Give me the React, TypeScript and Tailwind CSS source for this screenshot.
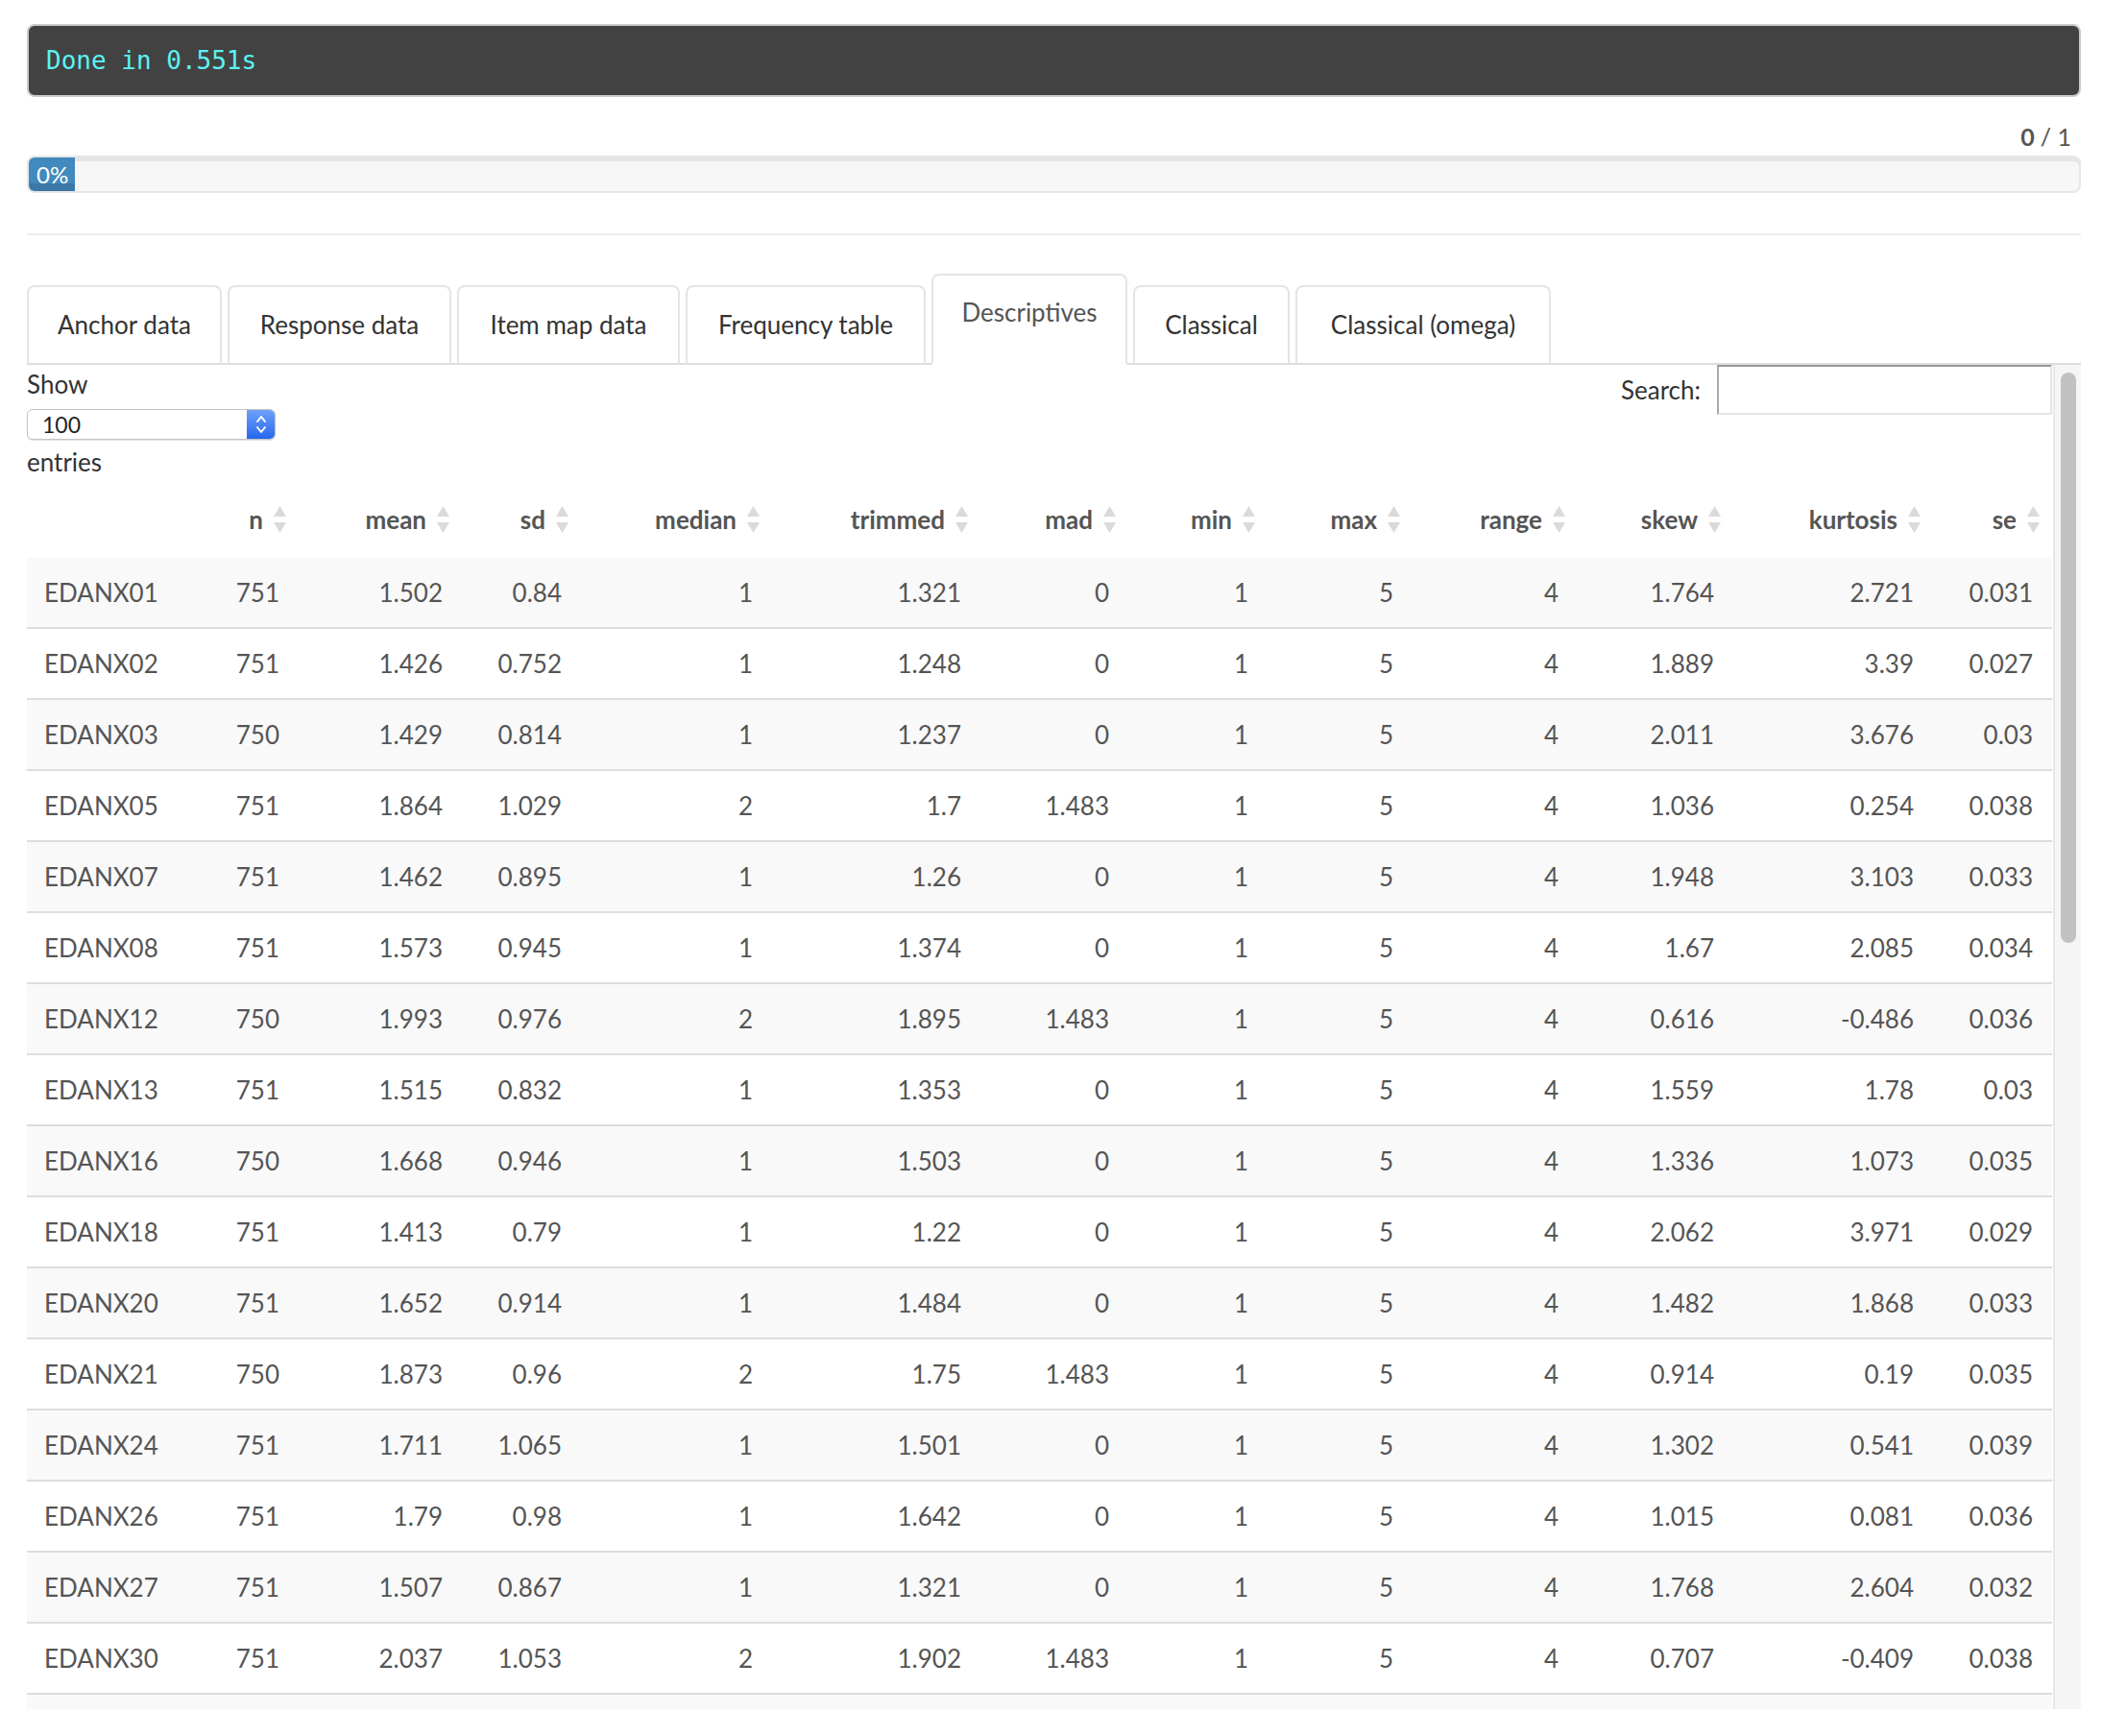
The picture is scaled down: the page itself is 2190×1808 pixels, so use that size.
import React from 'react';

type Row = string[];

const columns = ['', 'n', 'mean', 'sd', 'median', 'trimmed', 'mad', 'min', 'max', 'range', 'skew', 'kurtosis', 'se'];

const rows: Row[] = [
  ['EDANX01', '751', '1.502', '0.84', '1', '1.321', '0', '1', '5', '4', '1.764', '2.721', '0.031'],
  ['EDANX02', '751', '1.426', '0.752', '1', '1.248', '0', '1', '5', '4', '1.889', '3.39', '0.027'],
  ['EDANX03', '750', '1.429', '0.814', '1', '1.237', '0', '1', '5', '4', '2.011', '3.676', '0.03'],
  ['EDANX05', '751', '1.864', '1.029', '2', '1.7', '1.483', '1', '5', '4', '1.036', '0.254', '0.038'],
  ['EDANX07', '751', '1.462', '0.895', '1', '1.26', '0', '1', '5', '4', '1.948', '3.103', '0.033'],
  ['EDANX08', '751', '1.573', '0.945', '1', '1.374', '0', '1', '5', '4', '1.67', '2.085', '0.034'],
  ['EDANX12', '750', '1.993', '0.976', '2', '1.895', '1.483', '1', '5', '4', '0.616', '-0.486', '0.036'],
  ['EDANX13', '751', '1.515', '0.832', '1', '1.353', '0', '1', '5', '4', '1.559', '1.78', '0.03'],
  ['EDANX16', '750', '1.668', '0.946', '1', '1.503', '0', '1', '5', '4', '1.336', '1.073', '0.035'],
  ['EDANX18', '751', '1.413', '0.79', '1', '1.22', '0', '1', '5', '4', '2.062', '3.971', '0.029'],
  ['EDANX20', '751', '1.652', '0.914', '1', '1.484', '0', '1', '5', '4', '1.482', '1.868', '0.033'],
  ['EDANX21', '750', '1.873', '0.96', '2', '1.75', '1.483', '1', '5', '4', '0.914', '0.19', '0.035'],
  ['EDANX24', '751', '1.711', '1.065', '1', '1.501', '0', '1', '5', '4', '1.302', '0.541', '0.039'],
  ['EDANX26', '751', '1.79', '0.98', '1', '1.642', '0', '1', '5', '4', '1.015', '0.081', '0.036'],
  ['EDANX27', '751', '1.507', '0.867', '1', '1.321', '0', '1', '5', '4', '1.768', '2.604', '0.032'],
  ['EDANX30', '751', '2.037', '1.053', '2', '1.902', '1.483', '1', '5', '4', '0.707', '-0.409', '0.038'],
];

const tabs = [
  { label: 'Anchor data', w: 'w-[203px]' },
  { label: 'Response data', w: 'w-[233px]' },
  { label: 'Item map data', w: 'w-[232px]' },
  { label: 'Frequency table', w: 'w-[250px]' },
  { label: 'Descriptives', w: 'w-[204px]', active: true },
  { label: 'Classical', w: 'w-[163px]' },
  { label: 'Classical (omega)', w: 'w-[266px]' },
];

const gridCols =
  'grid grid-cols-[172px_111px_170px_124px_199px_217px_154px_145px_151px_172px_162px_208px_124px]';

const SortIcon = () => (
  <svg width="15" height="30" viewBox="0 0 15 30" className="shrink-0">
    <polygon points="7.5,1 14,12 1,12" fill="#dadada" />
    <polygon points="1,18 14,18 7.5,29" fill="#dadada" />
  </svg>
);

const App: React.FC = () => {
  return (
    <div className="min-h-screen bg-white font-['Lato',sans-serif] text-[#333]">
      <div className="ml-[28px] w-[2139px] pt-[25px]">
        {/* console output */}
        <div className="flex h-[76px] items-center rounded-[8px] border-2 border-[#cacaca] bg-[#424242] px-[18px] font-['DejaVu_Sans_Mono',monospace] text-[26px] text-[#5cf2f2]">
          Done in 0.551s
        </div>

        {/* progress */}
        <div className="mt-[23px] flex h-[36px] justify-end pr-[10px] text-[25px] leading-[36px] text-[#555]">
          <span className="font-bold">0</span>
          <span className="ml-[6px]">/ 1</span>
        </div>
        <div className="mt-[2px] h-[39px] overflow-hidden rounded-[8px] border-2 border-[#e6e6e6] bg-[#f7f7f7] shadow-[inset_0_4px_0_rgba(0,0,0,0.07)]">
          <div className="flex h-full w-[48px] items-center bg-[#4289bd] pl-[8px] text-[24px] text-white shadow-[inset_0_-8px_0_rgba(0,0,0,0.12)]">
            0%
          </div>
        </div>
        <div className="mt-[42px] h-[2px] bg-[#eeeeee]" />

        {/* tabs */}
        <div className="mt-[40px] flex items-end gap-[6px] border-b-2 border-[#dddddd]">
          {tabs.map((t) =>
            t.active ? (
              <div
                key={t.label}
                className={`${t.w} -mb-[2px] flex justify-center rounded-t-[8px] border-2 border-[#e4e4e4] border-b-white bg-white pt-[18px] pb-[33px] text-[26px] leading-[40px] text-[#555]`}
              >
                {t.label}
              </div>
            ) : (
              <div
                key={t.label}
                className={`${t.w} -mb-[2px] flex justify-center rounded-t-[8px] border-2 border-[#e4e4e4] border-b-[#dddddd] pt-[19px] pb-[20px] text-[26px] leading-[40px] text-[#333]`}
              >
                {t.label}
              </div>
            )
          )}
        </div>

        {/* tab content */}
        <div className="flex h-[1400px] overflow-hidden">
          <div className="w-[2110px] overflow-hidden">
            <div className="flex items-start justify-between">
              <div className="text-[26px] leading-[40px] text-[#333]">
                <div>Show</div>
                <div className="mt-[6px] flex h-[32px] w-[259px] overflow-hidden rounded-[6px] border border-[#c4c4c4] bg-white shadow-[0_1px_1px_rgba(0,0,0,0.12)]">
                  <div className="flex flex-1 items-center pl-[15px] text-[23px] leading-none text-[#222]">100</div>
                  <div className="flex w-[29px] items-center justify-center bg-gradient-to-b from-[#6fa0f8] to-[#2467f0]">
                    <svg width="12" height="22" viewBox="0 0 12 22" fill="none" stroke="white" strokeWidth="2" strokeLinecap="round" strokeLinejoin="round">
                      <polyline points="2,8 6,3 10,8" />
                      <polyline points="2,14 6,19 10,14" />
                    </svg>
                  </div>
                </div>
                <div className="mt-[3px]">entries</div>
              </div>
              <div className="flex items-center pr-[1px]">
                <span className="mr-[17px] text-[26px] text-[#333]">Search:</span>
                <div className="h-[52px] w-[349px] border-2 border-[#e6e6e6] border-t-[#999999] border-l-[#a8a8a8] bg-white" />
              </div>
            </div>

            {/* table */}
            <div className="w-[2109px]">
              <div className={`${gridCols} h-[80px] items-center text-[26px] font-bold text-[#555]`}>
                {columns.map((c, i) =>
                  i === 0 ? (
                    <div key={i} />
                  ) : (
                    <div key={i} className="flex items-center justify-end gap-[10px] pr-[12px]">
                      <span>{c}</span>
                      <SortIcon />
                    </div>
                  )
                )}
              </div>
              {rows.map((r, ri) => (
                <div
                  key={r[0]}
                  className={`${gridCols} h-[74px] items-center border-b-2 border-[#dddddd] text-[26px] text-[#555] ${
                    ri % 2 === 0 ? 'bg-[#f9f9f9]' : 'bg-white'
                  }`}
                >
                  {r.map((v, ci) => (
                    <div key={ci} className={ci === 0 ? 'pl-[18px] text-left' : 'pr-[20px] text-right'}>
                      {v}
                    </div>
                  ))}
                </div>
              ))}
              {/* next row, scrolled out of view */}
              <div className="h-[74px] bg-[#f9f9f9]" />
            </div>
          </div>

          {/* scrollbar */}
          <div className="w-[29px] border-l-2 border-[#e8e8e8] bg-[#f5f5f5] pt-[8px]">
            <div className="mx-auto h-[594px] w-[16px] rounded-full bg-[#c1c1c1]" />
          </div>
        </div>
      </div>
    </div>
  );
};

export default App;
